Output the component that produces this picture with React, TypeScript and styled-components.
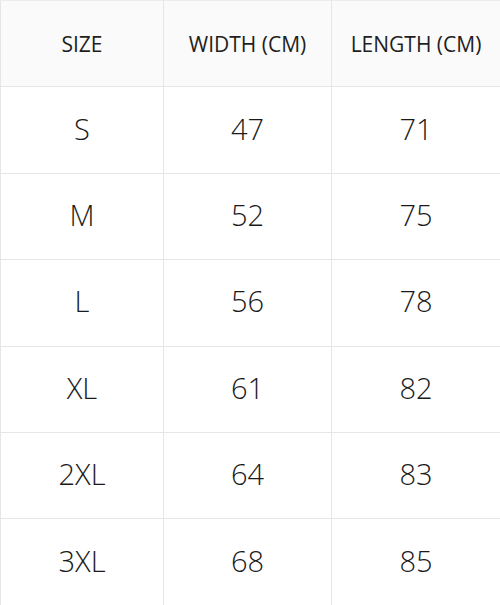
import React from 'react';
import styled, { createGlobalStyle } from 'styled-components';

const GlobalStyle = createGlobalStyle`
  html, body {
    margin: 0;
    padding: 0;
    background: #ffffff;
  }
  body {
    font-family: "Open Sans", "Liberation Sans", sans-serif;
    color: #222222;
  }
`;

const Table = styled.table`
  width: 500px;
  border-collapse: collapse;
  table-layout: fixed;
`;

const Row = styled.tr`
  height: 86.4px;
`;

const HeadCell = styled.th<{ $width: number }>`
  width: ${(p) => p.$width}px;
  height: 85.4px;
  box-sizing: border-box;
  border: 1px solid #e6e6e6;
  border-top: 1px solid #ececec;
  background: #fafafa;
  font-size: 21px;
  font-weight: 400;
  color: #1f1f1f;
  text-align: center;
  vertical-align: middle;
  padding: 0;
`;

const Cell = styled.td`
  height: 85.4px;
  box-sizing: border-box;
  border: 1px solid #e6e6e6;
  font-size: 29px;
  font-weight: 300;
  color: #1a1a1a;
  text-align: center;
  vertical-align: middle;
  padding: 0 0 4px;
`;

const rows = [
  ['S', '47', '71'],
  ['M', '52', '75'],
  ['L', '56', '78'],
  ['XL', '61', '82'],
  ['2XL', '64', '83'],
  ['3XL', '68', '85'],
];

const App: React.FC = () => {
  return (
    <>
      <GlobalStyle />
      <Table>
        <thead>
          <Row>
            <HeadCell $width={163}>SIZE</HeadCell>
            <HeadCell $width={168}>WIDTH (CM)</HeadCell>
            <HeadCell $width={169}>LENGTH (CM)</HeadCell>
          </Row>
        </thead>
        <tbody>
          {rows.map((r) => (
            <Row key={r[0]}>
              {r.map((c, i) => (
                <Cell key={i}>{c}</Cell>
              ))}
            </Row>
          ))}
        </tbody>
      </Table>
    </>
  );
};

export default App;
